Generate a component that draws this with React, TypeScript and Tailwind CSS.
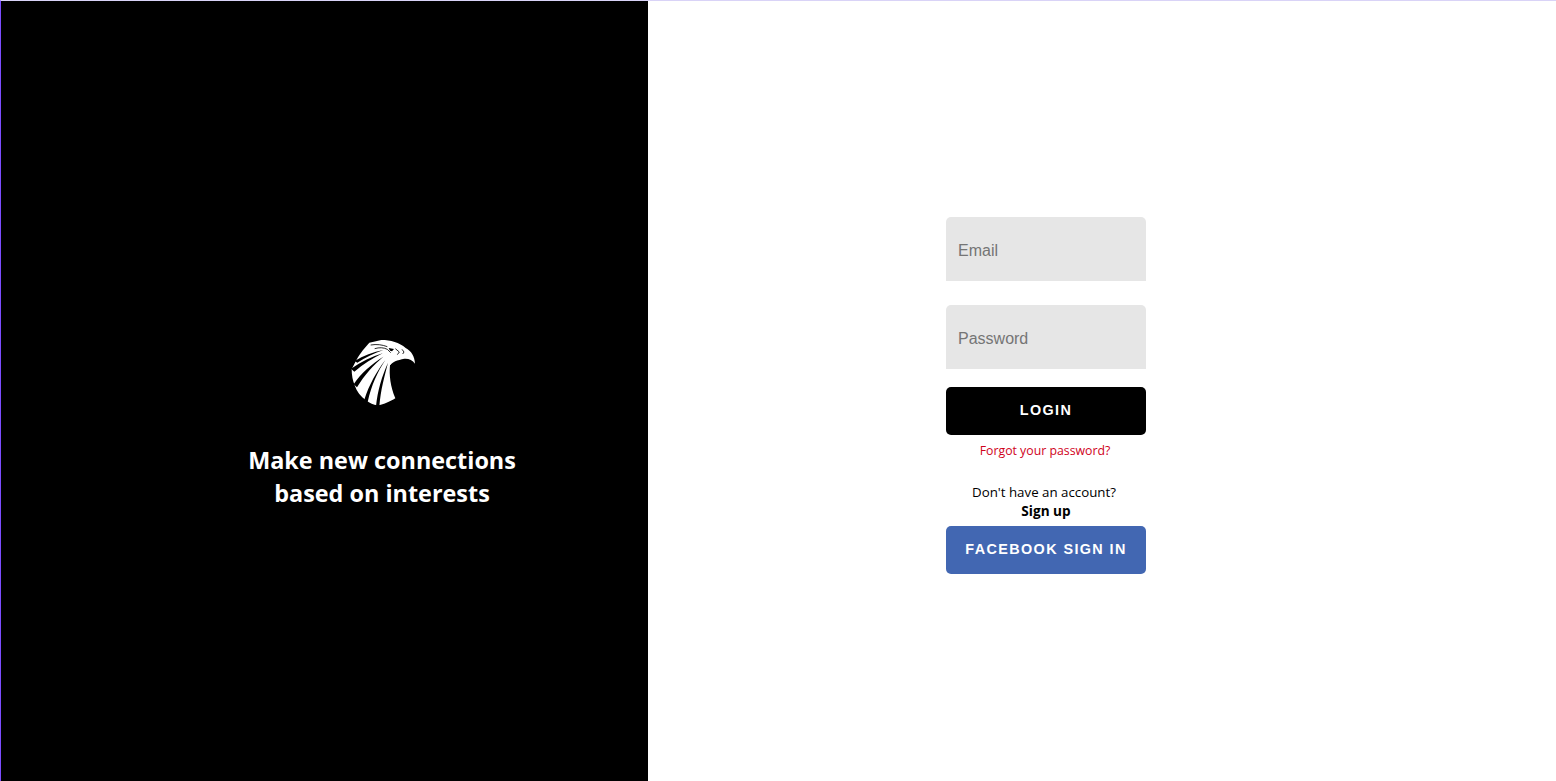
function Eagle() {
  return (
    <svg viewBox="0 0 255 255" className="h-[85px] w-[85px]">
      {/* silhouette */}
      <path
        fill="#fff"
        d="M88 38 L124 30 C152 30 178 38 197 54 C214 63 224 79 225 101 C217 90 207 85 193 86 C172 90 156 96 150 106 C147 135 151 170 166 205 C150 214 134 224 112 226 C100 225 90 220 78 211 C62 200 50 185 44 166 C38 152 35 135 35 118 L46 96 C56 76 68 60 88 38 Z"
      />
      {/* feather gaps */}
      <g fill="#000">
        <path d="M130 60 C100 70 76 83 52 98 L44 93 C70 77 100 66 130 60 Z" />
        <path d="M128 70 C97 85 70 102 43 125 L33 116 C64 95 96 80 128 70 Z" />
        <path d="M130 80 C101 105 73 135 51 172 L41 163 C63 129 96 102 130 80 Z" />
        <path d="M136 90 C113 125 94 165 83 216 L73 209 C87 165 110 124 136 90 Z" />
        <path d="M144 98 C133 140 122 180 118 229 L108 229 C113 180 126 138 144 98 Z" />
      </g>
      {/* head lines and eye */}
      <g fill="none" stroke="#000" strokeWidth="2.5">
        <path d="M92 45 C110 42 126 44 142 50" />
        <path d="M104 56 C118 52 130 52 142 58 L152 68" />
        <path d="M166 56 L178 66 L172 74" />
        <path d="M186 58 L192 66 L188 72" />
      </g>
      <path d="M146 54 L162 57 L156 64 L150 62 Z" fill="#000" />
      <path d="M175 76 C170 84 160 92 150 106 L146 90 C154 84 164 78 175 76 Z" fill="#fff" />
    </svg>
  );
}

export default function App() {
  return (
    <div className="flex h-[781px] w-full overflow-hidden border-t border-l border-t-[#d9d3f7] border-l-[#7c4dff] bg-white">
      <section className="flex h-full w-[647px] flex-col items-center bg-black pt-[329px] pl-[116px]">
        <div className="mr-[1px] flex flex-col items-center">
          <Eagle />
          <h1 className="mt-[29px] text-center font-['Open_Sans',sans-serif] text-[23.4px] leading-[33px] font-bold whitespace-nowrap text-white">
            Make new connections
            <br />
            based on interests
          </h1>
        </div>
      </section>

      <main className="flex flex-1 justify-center pt-[216px] pr-[112px]">
        <form className="flex w-[200px] flex-col items-center font-['Liberation_Sans',sans-serif]">
          <input
            type="text"
            placeholder="Email"
            className="h-16 w-full rounded-t-[5px] bg-[#e6e6e6] px-3 pt-1 text-base outline-none placeholder:text-[#757575]"
          />
          <input
            type="password"
            placeholder="Password"
            className="mt-6 h-16 w-full rounded-t-[5px] bg-[#e6e6e6] px-3 pt-1 text-base outline-none placeholder:text-[#757575]"
          />
          <button
            type="button"
            className="mt-[18px] h-12 w-full rounded-[5px] bg-black text-[14.4px] font-bold tracking-[1.4px] text-white"
          >
            LOGIN
          </button>
          <a href="#" className="mt-[7px] mr-[2px] font-['Open_Sans',sans-serif] text-[12.3px] leading-[17px] text-[#d0021b]">
            Forgot your password?
          </a>
          <p className="mt-6 mr-1 font-['Open_Sans',sans-serif] text-[13.3px] leading-[19px] text-black">
            Don't have an account?
          </p>
          <a href="#" className="font-['Open_Sans',sans-serif] text-[13.6px] leading-[18px] font-bold text-black">
            Sign up
          </a>
          <button
            type="button"
            className="mt-[6px] h-12 w-full rounded-[5px] bg-[#4267b2] text-[14.4px] font-bold tracking-[1.4px] text-white"
          >
            FACEBOOK SIGN IN
          </button>
        </form>
      </main>
    </div>
  );
}
